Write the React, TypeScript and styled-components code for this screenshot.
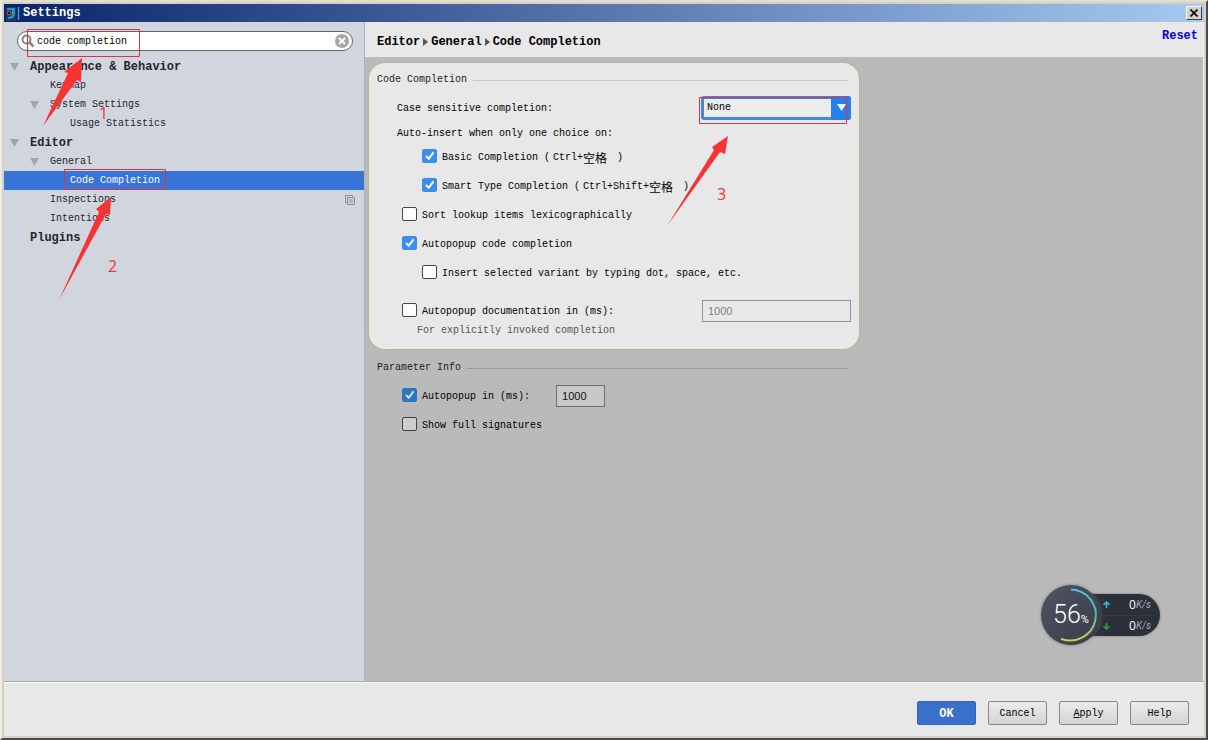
import React from 'react';
import styled, { createGlobalStyle, css } from 'styled-components';

const mono = '"Liberation Mono", "Noto Sans CJK SC", monospace';
const sans = '"Liberation Sans", Arial, sans-serif';

const GlobalStyle = createGlobalStyle`
  *, *::before, *::after { box-sizing: border-box; }
  body { margin: 0; background: #d4d0c8; color: #000; font: 10px/16px ${mono}; }
  button, input, select { font: inherit; color: inherit; }
  h1, h2, p, ul, ol, fieldset { margin: 0; padding: 0; }
`;

const Window = styled.div`
  position: relative;
  display: flex;
  flex-direction: column;
  min-height: 100vh;
  padding: 2px;
  border: 2px solid;
  border-color: #e2dfcf #4a4a4a #4a4a4a #f0eee4;
  background: #d4d0c8;
`;

const TitleBar = styled.header`
  display: flex;
  align-items: center;
  gap: 3px;
  height: 18px;
  padding: 0 2px;
  background: linear-gradient(90deg, #0a246a, #a6caf0);
`;

const WindowTitle = styled.h1`
  flex: 1;
  padding-top: 1px;
  color: #fff;
  font-size: 12px;
  line-height: 17px;
`;

const CloseButton = styled.button`
  display: flex;
  align-items: center;
  justify-content: center;
  width: 16px;
  height: 14px;
  padding: 0;
  border: 1px solid;
  border-color: #fff #404040 #404040 #fff;
  background: #d4d0c8;
`;

const Body = styled.div`
  display: flex;
  flex: 1;
`;

const Sidebar = styled.nav`
  width: 361px;
  padding-top: 9px;
  border-right: 1px solid #aeb2b0;
  background: #d1d6de;
`;

const SearchBox = styled.label`
  display: flex;
  align-items: center;
  gap: 2px;
  height: 20px;
  margin: 0 11px 6px 13px;
  padding: 0 3px;
  border: 1px solid #5d626b;
  border-radius: 10px;
  background: #fff;
`;

const SearchInput = styled.input`
  flex: 1;
  min-width: 0;
  padding: 2px 0 0;
  border: 0;
  outline: 0;
  background: transparent;
`;

const ClearButton = styled.button`
  display: flex;
  padding: 0;
  border: 0;
  background: transparent;
`;

const Tree = styled.ul`
  list-style: none;
`;

const TreeRow = styled.li<{ $level: number; $bold?: boolean; $selected?: boolean }>`
  display: flex;
  align-items: center;
  height: 19px;
  padding: 0 9px 0 ${p => 6 + p.$level * 20}px;
  color: #23262b;
  ${p => p.$bold && css`font-size: 12px; font-weight: bold;`}
  ${p => p.$selected && css`background: #3875d7; color: #fff;`}
`;

const Twisty = styled.span`
  display: flex;
  width: 20px;
`;

const TreeLabel = styled.span`
  flex: 1;
`;

const Main = styled.main`
  display: flex;
  flex: 1;
  flex-direction: column;
  min-width: 0;
  border-right: 1px solid #f4f4f4;
  background: #bababa;
`;

const PageHeader = styled.div`
  display: flex;
  justify-content: space-between;
  height: 35px;
  padding: 6px 5px 0 12px;
  background: #e8e8e8;
  font-size: 12px;
  font-weight: bold;
`;

const Crumbs = styled.ol`
  display: flex;
  align-items: center;
  gap: 3px;
  height: 28px;
  list-style: none;
`;

const Crumb = styled.li`
  display: flex;
  align-items: center;
  gap: 3px;
`;

const ResetLink = styled.a`
  color: #0000e0;
  text-decoration: none;
`;

const Section = styled.section<{ $spotlight?: boolean }>`
  max-width: 490px;
  margin: 2px 4px 0;
  border: 2px solid transparent;
  padding: 7px 6px 11px;
  ${p => p.$spotlight && css`
    margin-top: 6px;
    border-color: #ebebdb;
    border-radius: 16px;
    background: #e8e8e8;
    box-shadow: 0 0 2px 1px #b4b5a6;
  `}
`;

const SectionTitle = styled.h2`
  display: flex;
  align-items: center;
  gap: 6px;
  margin: 0 3px 5px 0;
  font-size: 10px;
  font-weight: normal;
  line-height: 16px;
  color: #222;
`;

const Rule = styled.span<{ $dim?: boolean }>`
  flex: 1;
  height: 1px;
  background: ${p => (p.$dim ? '#9d9d9d' : '#c3c8d2')};
`;

const Row = styled.div<{ $indent: number; $gap?: number; $spread?: boolean }>`
  display: flex;
  align-items: center;
  justify-content: ${p => (p.$spread ? 'space-between' : 'flex-start')};
  gap: 26px;
  height: 29px;
  margin-top: ${p => p.$gap ?? 0}px;
  padding-left: ${p => p.$indent}px;
`;

const FieldLabel = styled.label`
  padding-top: 2px;
`;

const Caption = styled.p`
  padding: 4px 0 0 20px;
`;

const Hint = styled.p`
  padding: 1px 0 0 40px;
  color: #555;
  line-height: 10px;
`;

const CheckLabel = styled.label`
  display: flex;
  align-items: center;
  gap: 5px;
`;

const CheckText = styled.span`
  display: flex;
  align-items: center;
  padding-top: 3px;
  white-space: pre;
`;

const CheckBox = styled.span`
  display: grid;
  width: 15px;
  height: 15px;
  > * { grid-area: 1 / 1; }
`;

const CheckInput = styled.input<{ $dim?: boolean }>`
  appearance: none;
  width: 15px;
  height: 14px;
  margin: 0;
  border: 1px solid #454545;
  border-radius: 2px;
  background: ${p => (p.$dim ? '#cdcdcd' : '#fff')};
  &:checked {
    border-color: ${p => (p.$dim ? '#2e74c0' : '#3a8eee')};
    background: ${p => (p.$dim ? '#2e74c0' : '#3a8eee')};
  }
  & + svg { visibility: hidden; pointer-events: none; }
  &:checked + svg { visibility: visible; }
`;

const Keys = styled.span`
  display: flex;
  align-items: center;
  padding: 0 4px 0 3px;
`;

const Han = styled.span`
  font-family: "Noto Sans CJK SC", sans-serif;
  font-size: 12px;
  line-height: 16px;
`;

const SelectWrap = styled.span`
  display: grid;
  width: 150px;
  height: 24px;
  > * { grid-area: 1 / 1; }
`;

const SelectInput = styled.select`
  appearance: none;
  padding: 0 22px 0 3px;
  border: 3px solid #3f8ad4;
  border-radius: 3px;
  outline: 0;
  background: #ececec;
`;

const SelectArrow = styled.span`
  display: flex;
  align-items: center;
  justify-content: center;
  justify-self: end;
  width: 20px;
  border-radius: 0 3px 3px 0;
  background: #2a80ea;
  pointer-events: none;
`;

const NumberInput = styled.input<{ $wide?: boolean }>`
  width: ${p => (p.$wide ? 149 : 49)}px;
  height: 22px;
  padding: 0 5px;
  border: 1px solid ${p => (p.$wide ? '#90939a' : '#6e6e6e')};
  background: ${p => (p.$wide ? '#e8e8e8' : '#c8c8c8')};
  color: ${p => (p.$wide ? '#808080' : '#111')};
  font-family: ${sans};
  font-size: 11px;
`;

const Footer = styled.footer`
  display: flex;
  justify-content: flex-end;
  gap: 12px;
  padding: 19px 15px 11px;
  border-top: 1px solid #adadad;
  box-shadow: inset 0 1px #f6f6f0;
  background: #e8e8e8;
`;

const DialogButton = styled.button<{ $primary?: boolean }>`
  width: 59px;
  height: 24px;
  padding: 2px 0 0;
  border: 1px solid #888;
  border-radius: 2px;
  background: linear-gradient(#ececec, #d3d3d3);
  ${p => p.$primary && css`
    border-color: #3468be;
    background: #3a70cb;
    color: #fff;
    font-size: 12px;
    font-weight: bold;
  `}
`;

const Overlay = styled.svg`
  position: absolute;
  top: 0;
  left: 0;
  pointer-events: none;
`;

const Step = styled.span<{ $x: number; $y: number }>`
  position: absolute;
  left: ${p => p.$x}px;
  top: ${p => p.$y}px;
  color: #f5333a;
  font: 16px/20px "Open Sans", sans-serif;
`;

const Monitor = styled.aside`
  position: absolute;
  right: 46px;
  bottom: 93px;
  display: flex;
  align-items: center;
  color: #fff;
  font-family: "Open Sans", sans-serif;
`;

const Gauge = styled.div`
  position: relative;
  z-index: 1;
  display: flex;
  align-items: baseline;
  justify-content: center;
  width: 60px;
  height: 60px;
  border-radius: 50%;
  background: linear-gradient(135deg, #4f5364, #383b48);
  box-shadow: 0 0 3px #6d6f72;
  font-family: Roboto, sans-serif;
  font-size: 25px;
  font-weight: 300;
  line-height: 60px;
`;

const GaugeArc = styled.svg`
  position: absolute;
  inset: 0;
`;

const Percent = styled.span`
  font-size: 11px;
  font-weight: 400;
`;

const Rates = styled.div`
  width: 89px;
  height: 42px;
  margin-left: -30px;
  padding: 0 9px 0 32px;
  border-radius: 0 21px 21px 0;
  background: #2c303b;
  box-shadow: 0 0 3px #77797c;
`;

const Rate = styled.div`
  display: flex;
  align-items: center;
  height: 21px;
  font-size: 12px;
  & + & { border-top: 1px solid #363b45; }
`;

const RateValue = styled.span`
  flex: 1;
  text-align: right;
`;

const Unit = styled.span`
  color: #a5a9b2;
  font-family: Roboto, sans-serif;
  font-size: 10px;
  font-style: italic;
`;

type Node = { label: string; level: number; bold?: boolean; open?: boolean; selected?: boolean; badge?: boolean };

const nodes: Node[] = [
  { label: 'Appearance & Behavior', level: 0, bold: true, open: true },
  { label: 'Keymap', level: 1 },
  { label: 'System Settings', level: 1, open: true },
  { label: 'Usage Statistics', level: 2 },
  { label: 'Editor', level: 0, bold: true, open: true },
  { label: 'General', level: 1, open: true },
  { label: 'Code Completion', level: 2, selected: true },
  { label: 'Inspections', level: 1, badge: true },
  { label: 'Intentions', level: 1 },
  { label: 'Plugins', level: 0, bold: true },
];

function Check({ checked, dim, children }: { checked?: boolean; dim?: boolean; children: React.ReactNode }) {
  return (
    <CheckLabel>
      <CheckBox>
        <CheckInput type="checkbox" defaultChecked={checked} $dim={dim} />
        <svg width="15" height="15" viewBox="0 0 15 15">
          <path d="M4 7 6.700 9.800 11.500 3.300" fill="none" stroke={dim ? '#d5dde8' : '#fff'} strokeWidth="2" />
        </svg>
      </CheckBox>
      <CheckText>{children}</CheckText>
    </CheckLabel>
  );
}

function CrumbArrow() {
  return <svg width="5" height="8" viewBox="0 0 5 8"><path d="M0 0 5 4 0 8Z" fill="#555" /></svg>;
}

export default function App() {
  return (
    <>
      <GlobalStyle />
      <Window>
        <TitleBar>
          <svg width="14" height="15" viewBox="0 0 14 15">
            <rect width="10" height="14" y="1" fill="#123a63" />
            <path d="M1 2H9V8Q9 13 2 13V11Q6 10.500 6 8V4H1Z" fill="#2f8fc4" />
            <circle cx="3" cy="7" r="2" fill="#1b1622" stroke="#a9683e" />
            <path d="M12.500 1V14" stroke="#3ca0d6" strokeWidth="1.500" />
          </svg>
          <WindowTitle>Settings</WindowTitle>
          <CloseButton aria-label="Close">
            <svg width="8" height="8" viewBox="0 0 8 8"><path d="M.5.5 7.500 7.500M7.500.5.5 7.500" stroke="#000" strokeWidth="1.600" /></svg>
          </CloseButton>
        </TitleBar>

        <Body>
          <Sidebar>
            <SearchBox>
              <svg width="14" height="14" viewBox="0 0 14 14">
                <circle cx="5.500" cy="5.500" r="4" fill="none" stroke="#858585" strokeWidth="2" />
                <path d="M8.500 8.500 12.500 12.500" stroke="#858585" strokeWidth="2.500" />
              </svg>
              <SearchInput type="text" defaultValue="code completion" aria-label="Search settings" />
              <ClearButton aria-label="Clear search">
                <svg width="14" height="14" viewBox="0 0 14 14">
                  <circle cx="7" cy="7" r="7" fill="#a6a6a6" />
                  <path d="M4 4 10 10M10 4 4 10" stroke="#fff" strokeWidth="2" />
                </svg>
              </ClearButton>
            </SearchBox>
            <Tree>
              {nodes.map(n => (
                <TreeRow key={n.label} $level={n.level} $bold={n.bold} $selected={n.selected}>
                  <Twisty>
                    {n.open && <svg width="9" height="8" viewBox="0 0 9 8"><path d="M0 0H9L4.500 8Z" fill="#a2a5aa" /></svg>}
                  </Twisty>
                  <TreeLabel>{n.label}</TreeLabel>
                  {n.badge && (
                    <svg width="10" height="10" viewBox="0 0 10 10" fill="none" stroke="#8a8f96">
                      <path d="M2.500 7.500H.5V.5H7.500V2.500M2.500 2.500H9.500V9.500H2.500ZM4 5H8M4 7H8" />
                    </svg>
                  )}
                </TreeRow>
              ))}
            </Tree>
          </Sidebar>

          <Main>
            <PageHeader>
              <Crumbs>
                <Crumb>Editor</Crumb>
                <Crumb><CrumbArrow />General</Crumb>
                <Crumb><CrumbArrow />Code Completion</Crumb>
              </Crumbs>
              <ResetLink href="#reset">Reset</ResetLink>
            </PageHeader>

            <Section $spotlight>
              <SectionTitle>Code Completion<Rule /></SectionTitle>
              <Row $indent={20} $spread>
                <FieldLabel htmlFor="case">Case sensitive completion:</FieldLabel>
                <SelectWrap>
                  <SelectInput id="case" defaultValue="None">
                    <option>None</option>
                    <option>All</option>
                    <option>First letter</option>
                  </SelectInput>
                  <SelectArrow>
                    <svg width="9" height="7" viewBox="0 0 9 7"><path d="M0 0H9L4.500 7Z" fill="#fff" /></svg>
                  </SelectArrow>
                </SelectWrap>
              </Row>
              <Caption>Auto-insert when only one choice on:</Caption>
              <Row $indent={45}>
                <Check checked>Basic Completion (<Keys>Ctrl+<Han>空格</Han></Keys> )</Check>
              </Row>
              <Row $indent={45}>
                <Check checked>Smart Type Completion (<Keys>Ctrl+Shift+<Han>空格</Han></Keys> )</Check>
              </Row>
              <Row $indent={25}><Check>Sort lookup items lexicographically</Check></Row>
              <Row $indent={25}><Check checked>Autopopup code completion</Check></Row>
              <Row $indent={45}><Check>Insert selected variant by typing dot, space, etc.</Check></Row>
              <Row $indent={25} $gap={9} $spread>
                <Check>Autopopup documentation in (ms):</Check>
                <NumberInput $wide type="text" defaultValue="1000" disabled aria-label="Documentation delay (ms)" />
              </Row>
              <Hint>For explicitly invoked completion</Hint>
            </Section>

            <Section>
              <SectionTitle>Parameter Info<Rule $dim /></SectionTitle>
              <Row $indent={25}>
                <Check checked dim>Autopopup in (ms):</Check>
                <NumberInput type="text" defaultValue="1000" aria-label="Parameter info delay (ms)" />
              </Row>
              <Row $indent={25}><Check dim>Show full signatures</Check></Row>
            </Section>
          </Main>
        </Body>

        <Footer>
          <DialogButton $primary>OK</DialogButton>
          <DialogButton>Cancel</DialogButton>
          <DialogButton><u>A</u>pply</DialogButton>
          <DialogButton>Help</DialogButton>
        </Footer>

        <Overlay width="900" height="320" viewBox="2 2 900 320">
          <g fill="none" stroke="#dc3248">
            <path d="M27.500 29.500H139.500V56.500H27.500Z" />
            <path d="M64.500 169.500H165.500V189.500H64.500Z" />
            <path d="M699.500 97.500H846.500V123.500H699.500Z" />
          </g>
          <g fill="#fb3234">
            <path d="M43 126 68 73 64 72 82 58 81 82 77 80Z" />
            <path d="M59 300 99 212 96 209 111 197 110 215 106 214Z" />
            <path d="M667 226 714 150 712 147 728 136 725 154 720 152Z" />
          </g>
        </Overlay>
        <Step $x={97} $y={101}>1</Step>
        <Step $x={106} $y={254}>2</Step>
        <Step $x={715} $y={182}>3</Step>

        <Monitor>
          <Gauge>
            56<Percent>%</Percent>
            <GaugeArc width="60" height="60" viewBox="0 0 60 60">
              <defs>
                <linearGradient id="arc" x1="0" y1="0" x2="0" y2="1">
                  <stop offset="0" stopColor="#4cc3dd" />
                  <stop offset=".5" stopColor="#62b39a" />
                  <stop offset="1" stopColor="#c3d24a" />
                </linearGradient>
              </defs>
              <path d="M30 4.500A25.500 25.500 0 1 1 20 53.700" fill="none" stroke="url(#arc)" strokeWidth="2" />
            </GaugeArc>
          </Gauge>
          <Rates>
            <Rate>
              <svg width="7" height="7" viewBox="0 0 7 7"><path d="M3.500 7V1M.5 4 3.500 1 6.500 4" fill="none" stroke="#35b4dc" strokeWidth="1.600" /></svg>
              <RateValue>0</RateValue><Unit>K/s</Unit>
            </Rate>
            <Rate>
              <svg width="7" height="7" viewBox="0 0 7 7"><path d="M3.500 0V6M.5 3 3.500 6 6.500 3" fill="none" stroke="#2ba03c" strokeWidth="1.600" /></svg>
              <RateValue>0</RateValue><Unit>K/s</Unit>
            </Rate>
          </Rates>
        </Monitor>
      </Window>
    </>
  );
}
